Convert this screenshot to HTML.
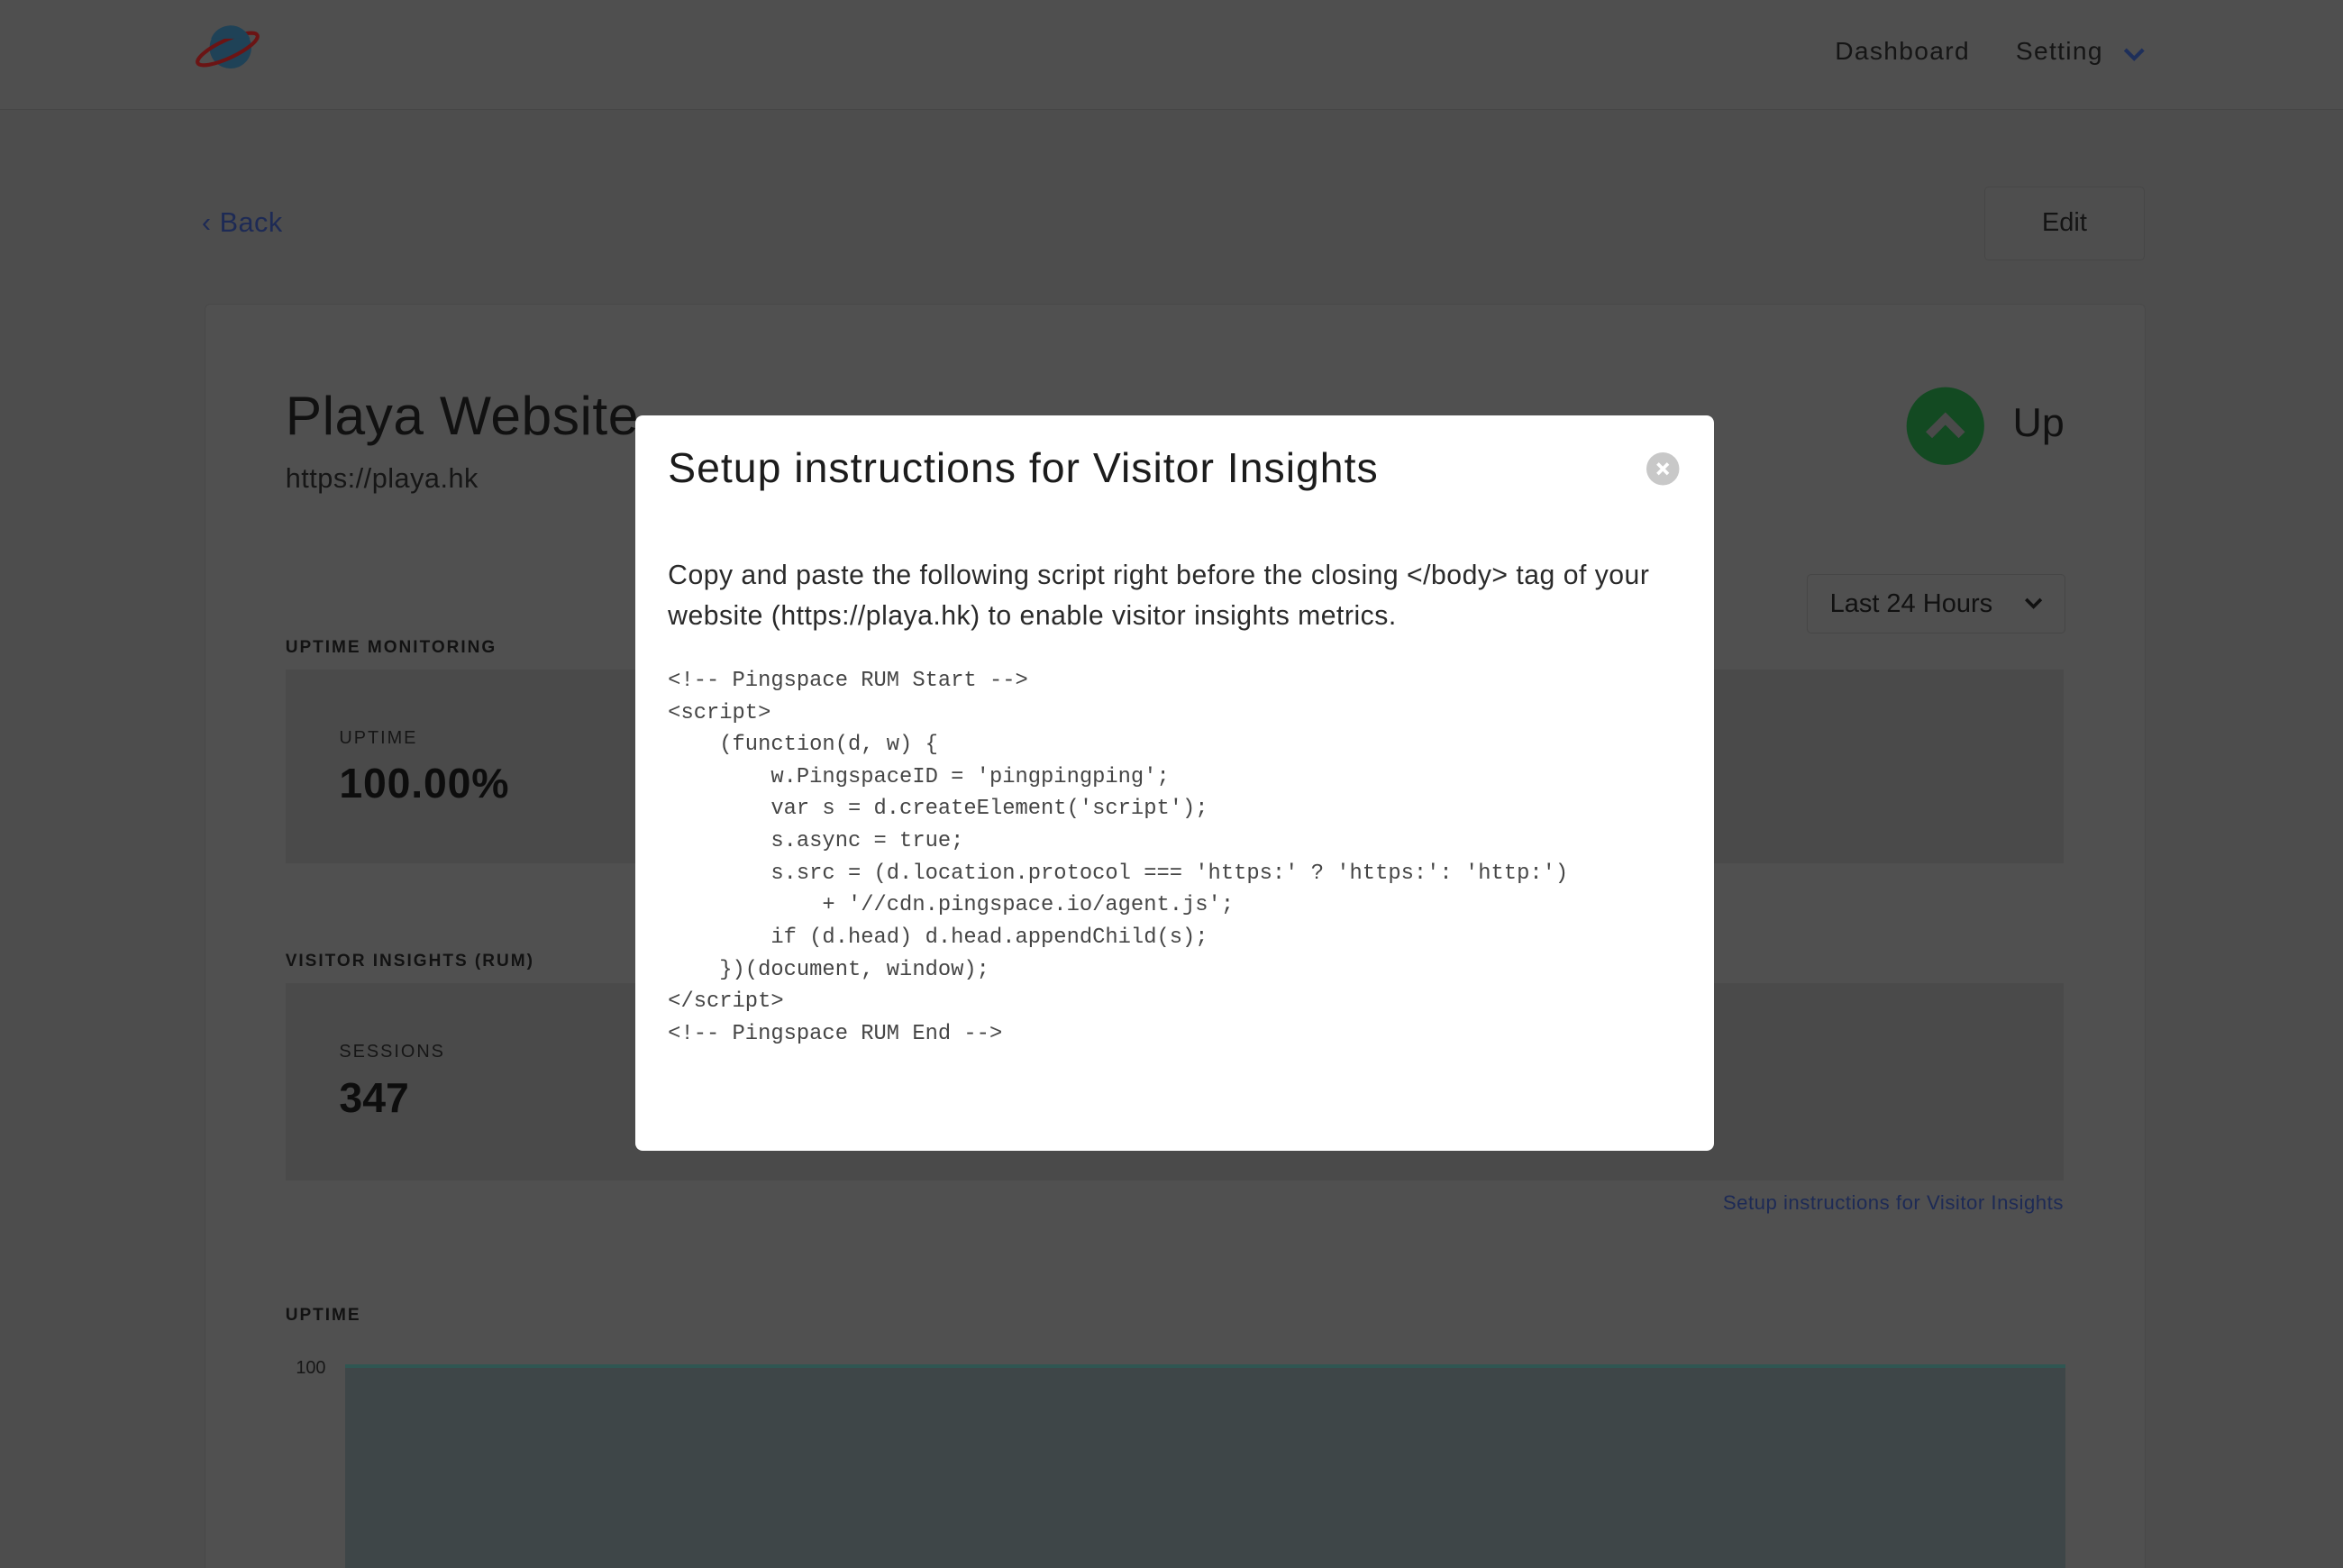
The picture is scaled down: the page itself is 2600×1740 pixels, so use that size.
<!DOCTYPE html>
<html><head><meta charset="utf-8">
<style>
html{margin:0;padding:0;overflow:hidden;width:2600px;height:1740px;}
body{margin:0;padding:0;width:1568px;height:1049px;overflow:hidden;zoom:1.65816;background:#4d4d4d;font-family:"Liberation Sans",sans-serif;color:#141414;position:relative;}
.abs{position:absolute;}
.hdr{left:0;top:0;width:1568px;height:73px;background:#4f4f4f;border-bottom:1px solid #464646;}
.nav{font-size:17px;letter-spacing:0.8px;color:#151515;}
.card{left:137px;top:203px;width:1298px;height:860px;background:#505050;border:1px solid #484848;border-radius:4px;}
.lbl{font-size:11.5px;font-weight:bold;letter-spacing:1.2px;color:#121212;}
.box{background:#4a4a4a;}
.modal{left:425px;top:278px;width:722px;height:492px;background:#fff;border-radius:5px;}
pre{margin:0;font-family:"Liberation Mono",monospace;font-size:14.35px;line-height:21.5px;color:#454545;}
</style></head><body>
<div class="abs hdr"></div>
<svg class="abs" style="left:130px;top:14px" width="48" height="36" viewBox="0 0 48 36">
<circle cx="24" cy="18" r="14" fill="#1f4257"/>
<ellipse cx="22" cy="19" rx="22" ry="6" transform="rotate(-25 22 19)" fill="none" stroke="#6b1414" stroke-width="2.5"/>
<path d="M11 12 A14 14 0 0 1 37 12" fill="#1f4257"/>
</svg>
<div class="abs nav" style="left:1228px;top:24px">Dashboard</div>
<div class="abs nav" style="left:1349px;top:24px">Setting</div>
<svg class="abs" style="left:1420px;top:30px" width="16" height="12"><path d="M2 3 L8 9 L14 3" fill="none" stroke="#1e2f5a" stroke-width="2.5"/></svg>
<div class="abs" style="left:135px;top:139px;font-size:18.5px;letter-spacing:0.3px;color:#1d2a55">&#8249; Back</div>
<div class="abs" style="left:1328px;top:125px;width:106px;height:48px;border:1px solid #464646;border-radius:3px;background:#4e4e4e;font-size:17.5px;line-height:48px;text-align:center;color:#141414">Edit</div>
<div class="abs card"></div>
<div class="abs" style="left:191px;top:257px;font-size:36.5px;letter-spacing:0.3px;color:#111">Playa Website</div>
<div class="abs" style="left:191px;top:310px;font-size:18.5px;letter-spacing:0.3px;color:#161616">https://playa.hk</div>
<svg class="abs" style="left:1275px;top:258px" width="54" height="54"><circle cx="27" cy="27" r="26" fill="#134a22"/><path d="M16 33 L27 22 L38 33" fill="none" stroke="#4a4a4a" stroke-width="6"/></svg>
<div class="abs" style="left:1347px;top:268px;font-size:27px;color:#111">Up</div>
<div class="abs" style="left:1209px;top:384px;width:172px;height:39px;border:1px solid #464646;border-radius:3px;font-size:17.5px;line-height:39px;color:#111"><span style="margin-left:15px">Last 24 Hours</span></div>
<svg class="abs" style="left:1354px;top:398px" width="14" height="12"><path d="M2 3 L7 8 L12 3" fill="none" stroke="#111" stroke-width="2.2"/></svg>
<div class="abs lbl" style="left:191px;top:427px">UPTIME MONITORING</div>
<div class="abs box" style="left:191px;top:448px;width:1190px;height:130px"></div>
<div class="abs lbl" style="left:227px;top:487px;font-weight:normal;font-size:12px;color:#161616">UPTIME</div>
<div class="abs" style="left:227px;top:508px;font-size:28px;font-weight:bold;letter-spacing:0.5px;color:#0d0d0d">100.00%</div>
<div class="abs lbl" style="left:191px;top:637px">VISITOR INSIGHTS (RUM)</div>
<div class="abs box" style="left:191px;top:658px;width:1190px;height:132px"></div>
<div class="abs lbl" style="left:227px;top:697px;font-weight:normal;font-size:12px;color:#161616">SESSIONS</div>
<div class="abs" style="left:227px;top:718px;font-size:28px;font-weight:bold;color:#0d0d0d">347</div>
<div class="abs" style="right:187px;top:797px;font-size:13.4px;letter-spacing:0.3px;color:#1d2a55">Setup instructions for Visitor Insights</div>
<div class="abs lbl" style="left:191px;top:874px">UPTIME</div>
<div class="abs" style="left:198px;top:909px;font-size:12px;color:#161616">100</div>
<div class="abs" style="left:231px;top:913px;width:1151px;height:140px;background:#3e4648;border-top:3px solid #2f5652"></div>
<div class="abs modal">
<div class="abs" style="left:22px;top:19px;font-size:28px;letter-spacing:0.6px;color:#1c1c1c">Setup instructions for Visitor Insights</div>
<svg class="abs" style="left:677px;top:25px" width="22" height="22"><circle cx="11" cy="11" r="11" fill="#c8c8c8"/><path d="M7.5 7.5 L14.5 14.5 M14.5 7.5 L7.5 14.5" stroke="#fff" stroke-width="2.2"/></svg>
<div class="abs" style="left:22px;top:94px;width:690px;font-size:18.2px;letter-spacing:0.3px;line-height:27px;color:#2a2a2a">Copy and paste the following script right before the closing &lt;/body&gt; tag of your website (https://playa.hk) to enable visitor insights metrics.</div>
<pre class="abs" style="left:22px;top:167px">&lt;!-- Pingspace RUM Start --&gt;
&lt;script&gt;
    (function(d, w) {
        w.PingspaceID = 'pingpingping';
        var s = d.createElement('script');
        s.async = true;
        s.src = (d.location.protocol === 'https:' ? 'https:': 'http:')
            + '//cdn.pingspace.io/agent.js';
        if (d.head) d.head.appendChild(s);
    })(document, window);
&lt;/script&gt;
&lt;!-- Pingspace RUM End --&gt;</pre>
</div>
</body></html>
